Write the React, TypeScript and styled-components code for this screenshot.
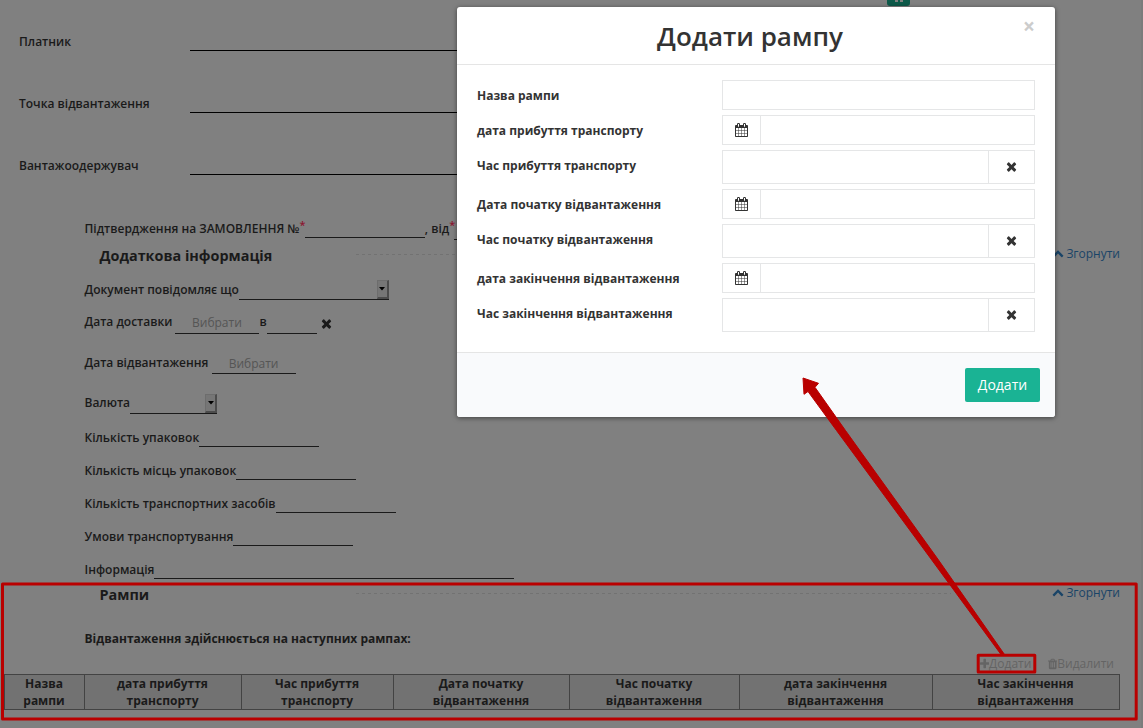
import React from "react";
import styled, { createGlobalStyle } from "styled-components";

const Global = createGlobalStyle`
  * { box-sizing: border-box; }
  body { margin: 0; background: #808080; font-family: "Open Sans", sans-serif; font-size: 12px; line-height: 18px; color: #1a1a1a; overflow: hidden; }
`;

const Page = styled.main`
  position: relative;
  width: 1143px;
  height: 728px;
  overflow: hidden;
  background: #808080;
  border-right: 2px solid #7b7b7b;
`;

const Parties = styled.section`
  display: flex;
  flex-direction: column;
  gap: 31px;
  padding: 20px 0 0 19px;
`;

const PartyRow = styled.div`
  display: flex;
  align-items: flex-end;
  height: 31px;
`;

const PartyLabel = styled.span`
  width: 171px;
  font-weight: 600;
`;

const PartyInput = styled.div`
  width: 700px;
  height: 31px;
  border-bottom: 1px solid #000;
`;

const Field = styled.div<{ $h: number }>`
  display: flex;
  align-items: flex-end;
  height: ${(p) => p.$h}px;
  padding-left: 84.5px;
`;

const Label = styled.span<{ $up?: number }>`
  flex: none;
  margin-bottom: ${(p) => p.$up ?? 0}px;
  font-weight: 600;
  white-space: pre;
`;

const Star = styled.span`
  flex: none;
  width: 5.2px;
  margin-bottom: 4px;
  font-size: 11px;
  font-weight: 600;
  color: #8c1630;
`;

const Blank = styled.div<{ $w: number; $drop?: number }>`
  flex: none;
  display: flex;
  justify-content: flex-end;
  width: ${(p) => p.$w}px;
  height: 20px;
  margin-bottom: -${(p) => p.$drop ?? 0}px;
  border-bottom: 1px solid #1a1a1a;
`;

const PickDate = styled(Blank)<{ $low?: boolean }>`
  justify-content: center;
  padding-top: ${(p) => (p.$low ? 1 : 0)}px;
  margin-left: ${(p) => (p.$low ? 0 : -0.6)}px;
  margin-right: ${(p) => (p.$low ? 0 : 0.6)}px;
  color: #555;
`;

const SelectArrow = styled.span`
  display: flex;
  align-items: center;
  justify-content: center;
  width: 12px;
  height: 19px;
  background: #767676;
  border: 1px solid;
  border-color: #6d6d6d #4c4c4c #4c4c4c #6d6d6d;
  border-right-width: 2px;
  border-bottom-width: 2px;
`;

const ClearSlot = styled.span`
  display: flex;
  margin: 0 0 3px 4px;
`;

const SectionHead = styled.header<{ $h: number }>`
  display: flex;
  align-items: center;
  height: ${(p) => p.$h}px;
  padding: 0 21px 0 99.5px;
`;

const SectionTitle = styled.h2`
  width: 256px;
  margin: 3px 0 0;
  font-size: 14.4px;
  line-height: 20px;
  font-weight: 700;
`;

const Dashes = styled.div`
  width: 595px;
  height: 1px;
  margin-top: 1px;
  background: repeating-linear-gradient(90deg, #727272 0 3px, transparent 3px 6px);
`;

const Collapse = styled.a`
  display: flex;
  align-items: center;
  gap: 2.5px;
  margin-left: auto;
  margin-top: -1px;
  color: #1a4467;
`;

const RampNote = styled.p`
  margin: 23px 0 0 84.5px;
  font-weight: 700;
`;

const TableTools = styled.div`
  display: flex;
  justify-content: flex-end;
  gap: 16.5px;
  margin-top: 7px;
  padding-right: 27px;
  color: #646464;
`;

const Tool = styled.span`
  display: flex;
  align-items: center;
`;

const Table = styled.table`
  width: 1116px;
  margin: 1px 0 0 4px;
  table-layout: fixed;
  border-collapse: collapse;
`;

const HeadCell = styled.th`
  height: 35px;
  padding: 0 11px 0 10px;
  border: 1px solid #434343;
  background: #727272;
  font-weight: 700;
  line-height: 17px;
  text-align: center;
`;

const TopTab = styled.div`
  position: absolute;
  left: 887px;
  top: 0;
  display: flex;
  justify-content: center;
  gap: 2px;
  width: 23px;
  height: 6px;
  border-radius: 0 0 3px 3px;
  background: #0d5a4a;
`;

const TabMark = styled.i`
  width: 3px;
  height: 2px;
  background: #808080;
`;

const Modal = styled.div`
  position: absolute;
  left: 457px;
  top: 7px;
  display: flex;
  flex-direction: column;
  width: 598px;
  height: 410px;
  border-radius: 3px;
  overflow: hidden;
  background: #fff;
  color: #333;
  box-shadow: 0 1px 5px rgba(0, 0, 0, 0.5);
`;

const ModalHeader = styled.header`
  position: relative;
  height: 58px;
  border-bottom: 1px solid #e5e5e5;
`;

const ModalTitle = styled.h1`
  margin: 0;
  padding-right: 12px;
  font-size: 26px;
  line-height: 58px;
  font-weight: 600;
  text-align: center;
`;

const Close = styled.span`
  position: absolute;
  right: 20px;
  top: 9px;
  font-size: 21px;
  line-height: 20px;
  font-weight: 700;
  color: #ccc;
`;

const ModalBody = styled.div`
  display: flex;
  flex-direction: column;
  gap: 5px;
  padding: 15px 20px 20px;
`;

const FormRow = styled.div`
  display: flex;
  align-items: flex-start;
`;

const FormLabel = styled.label`
  width: 245px;
  padding-top: 7px;
  font-weight: 700;
`;

const Control = styled.div<{ $tall?: boolean }>`
  display: flex;
  width: 313px;
  height: ${(p) => (p.$tall ? 34 : 30)}px;
  border: 1px solid #e5e6e7;
`;

const Addon = styled.span<{ $end?: boolean }>`
  display: flex;
  align-items: center;
  justify-content: center;
  width: ${(p) => (p.$end ? 46 : 38)}px;
  margin-left: ${(p) => (p.$end ? "auto" : 0)};
  border: 0 solid #e5e6e7;
  border-width: ${(p) => (p.$end ? "0 0 0 1px" : "0 1px 0 0")};
`;

const ModalFooter = styled.footer`
  flex: 1;
  display: flex;
  justify-content: flex-end;
  padding: 15px;
  border-top: 1px solid #e5e5e5;
  background: #f9fafc;
`;

const Submit = styled.button`
  width: 75px;
  height: 34px;
  padding: 0;
  border: 0;
  border-radius: 2px;
  background: #1ab394;
  color: #fff;
  font: 14px/20px "Open Sans", sans-serif;
`;

const Markup = styled.svg`
  position: absolute;
  left: 0;
  top: 0;
`;

const icons = {
  times: "M1490 1322q0 40-28 68l-136 136q-28 28-68 28t-68-28l-294-294-294 294q-28 28-68 28t-68-28l-136-136q-28-28-28-68t28-68l294-294-294-294q-28-28-28-68t28-68l136-136q28-28 68-28t68 28l294 294 294-294q28-28 68-28t68 28l136 136q28 28 28 68t-28 68l-294 294 294 294q28 28 28 68z",
  plus: "M1600 736v192q0 40-28 68t-68 28h-416v416q0 40-28 68t-68 28h-192q-40 0-68-28t-28-68v-416h-416q-40 0-68-28t-28-68v-192q0-40 28-68t68-28h416v-416q0-40 28-68t68-28h192q40 0 68 28t28 68v416h416q40 0 68 28t28 68z",
  up: "M1683 1331l-166 165q-19 19-45 19t-45-19l-531-531-531 531q-19 19-45 19t-45-19l-166-165q-19-19-19-45.5t19-45.5l742-741q19-19 45-19t45 19l742 741q19 19 19 45.5t-19 45.5z",
  trash: "M704 1376v-704q0-14-9-23t-23-9h-64q-14 0-23 9t-9 23v704q0 14 9 23t23 9h64q14 0 23-9t9-23zm256 0v-704q0-14-9-23t-23-9h-64q-14 0-23 9t-9 23v704q0 14 9 23t23 9h64q14 0 23-9t9-23zm256 0v-704q0-14-9-23t-23-9h-64q-14 0-23 9t-9 23v704q0 14 9 23t23 9h64q14 0 23-9t9-23zm-544-992h448l-48-117q-7-9-17-11h-317q-10 2-17 11zm928 32v64q0 14-9 23t-23 9h-96v948q0 83-47 143.5t-113 60.5h-832q-66 0-113-58.5t-47-141.5v-952h-96q-14 0-23-9t-9-23v-64q0-14 9-23t23-9h309l70-167q15-37 54-63t79-26h320q40 0 79 26t54 63l70 167h309q14 0 23 9t9 23z",
  calendar: "M128 1664h288v-288h-288v288zM480 1664h320v-288h-320v288zM128 1312h288v-320h-288v320zM480 1312h320v-320h-320v320zM128 928h288v-288h-288v288zM864 1664h320v-288h-320v288zM480 928h320v-288h-320v288zM1248 1664h288v-288h-288v288zM864 1312h320v-320h-320v320zM512 448v-288q0-13-9.5-22.5t-22.5-9.5h-64q-13 0-22.5 9.5t-9.5 22.5v288q0 13 9.5 22.5t22.5 9.5h64q13 0 22.5-9.5t9.5-22.5zM1248 1312h288v-320h-288v320zM864 928h320v-288h-320v288zM1248 928h288v-288h-288v288zM1280 448v-288q0-13-9.5-22.5t-22.5-9.5h-64q-13 0-22.5 9.5t-9.5 22.5v288q0 13 9.5 22.5t22.5 9.5h64q13 0 22.5-9.5t9.5-22.5zM1664 384v1280q0 52-38 90t-90 38h-1408q-52 0-90-38t-38-90v-1280q0-52 38-90t90-38h128v-96q0-66 47-113t113-47h64q66 0 113 47t47 113v96h384v-96q0-66 47-113t113-47h64q66 0 113 47t47 113v96h128q52 0 90 38t38 90z",
};

const viewBoxes: Record<keyof typeof icons, [number, number, number, number]> = {
  times: [192, 64, 1408, 1792],
  plus: [192, 0, 1408, 1664],
  up: [0, 128, 1792, 1792],
  trash: [192, 0, 1408, 1792],
  calendar: [0, 0, 1664, 1792],
};

function Icon({ name, size = 14 }: { name: keyof typeof icons; size?: number }) {
  const [x, y, w, h] = viewBoxes[name];
  const k = size / 1792;
  return (
    <svg width={w * k} height={h * k} viewBox={`${x} ${y} ${w} ${h}`} fill="currentColor">
      <path d={icons[name]} />
    </svg>
  );
}

function Caret() {
  return (
    <SelectArrow>
      <svg width="6" height="4" viewBox="0 0 6 4"><path d="M0 0h6L3 3.5z" fill="#000" /></svg>
    </SelectArrow>
  );
}

function Fold() {
  return (
    <Collapse><Icon name="up" size={12} />Згорнути</Collapse>
  );
}

const parties = ["Платник", "Точка відвантаження", "Вантажоодержувач"];

const blanks: [string, number][] = [
  ["Кількість упаковок", 120],
  ["Кількість місць упаковок", 120],
  ["Кількість транспортних засобів", 120],
  ["Умови транспортування", 120],
  ["Інформація", 360],
];

const columns: [string, number][] = [
  ["Назва рампи", 80],
  ["дата прибуття транспорту", 157],
  ["Час прибуття транспорту", 152],
  ["Дата початку відвантаження", 176],
  ["Час початку відвантаження", 170],
  ["дата закінчення відвантаження", 193],
  ["Час закінчення відвантаження", 187],
];

const rampFields: [string, "text" | "date" | "time"][] = [
  ["Назва рампи", "text"],
  ["дата прибуття транспорту", "date"],
  ["Час прибуття транспорту", "time"],
  ["Дата початку відвантаження", "date"],
  ["Час початку відвантаження", "time"],
  ["дата закінчення відвантаження", "date"],
  ["Час закінчення відвантаження", "time"],
];

export default function App() {
  return (
    <Page>
      <Global />
      <Parties>
        {parties.map((p) => (
          <PartyRow key={p}><PartyLabel>{p}</PartyLabel><PartyInput /></PartyRow>
        ))}
      </Parties>
      <Field $h={63}>
        <Label>Підтвердження на ЗАМОВЛЕННЯ №</Label><Star>*</Star>
        <Blank $w={120} /><Label>, від</Label><Star>*</Star><Blank $w={120} $drop={2} />
      </Field>
      <SectionHead $h={32}>
        <SectionTitle>Додаткова інформація</SectionTitle><Dashes /><Fold />
      </SectionHead>
      <Field $h={30}><Label $up={1}>Документ повідомляє що</Label><Blank $w={150}><Caret /></Blank></Field>
      <Field $h={34}>
        <Label $up={3}>{"Дата доставки "}</Label><PickDate $w={84}>Вибрати</PickDate>
        <Label $up={3}>в</Label><Blank $w={50} /><ClearSlot><Icon name="times" size={14} /></ClearSlot>
      </Field>
      <Field $h={40}><Label $up={2}>{"Дата відвантаження "}</Label><PickDate $w={84} $low>Вибрати</PickDate></Field>
      <Field $h={40}><Label $up={2}>Валюта</Label><Blank $w={87}><Caret /></Blank></Field>
      {blanks.map(([text, w]) => (
        <Field key={text} $h={33}><Label>{text}</Label><Blank $w={w} /></Field>
      ))}
      <SectionHead $h={28}>
        <SectionTitle>Рампи</SectionTitle><Dashes /><Fold />
      </SectionHead>
      <RampNote>Відвантаження здійснюється на наступних рампах:</RampNote>
      <TableTools>
        <Tool><Icon name="plus" size={12} />Додати</Tool>
        <Tool><Icon name="trash" size={12} />Видалити</Tool>
      </TableTools>
      <Table>
        <colgroup>{columns.map(([c, w]) => <col key={c} width={w} />)}</colgroup>
        <thead><tr>{columns.map(([c]) => <HeadCell key={c}>{c.slice(0, c.lastIndexOf(" "))}<br />{c.slice(c.lastIndexOf(" ") + 1)}</HeadCell>)}</tr></thead>
      </Table>
      <TopTab><TabMark /><TabMark /></TopTab>
      <Modal>
        <ModalHeader><ModalTitle>Додати рампу</ModalTitle><Close>×</Close></ModalHeader>
        <ModalBody>
          {rampFields.map(([text, kind]) => (
            <FormRow key={text}>
              <FormLabel>{text}</FormLabel>
              <Control $tall={kind === "time"}>
                {kind === "date" && <Addon><Icon name="calendar" /></Addon>}
                {kind === "time" && <Addon $end><Icon name="times" /></Addon>}
              </Control>
            </FormRow>
          ))}
        </ModalBody>
        <ModalFooter><Submit>Додати</Submit></ModalFooter>
      </Modal>
      <Markup width="1143" height="728" fill="none" stroke="#b90000" strokeLinejoin="round">
        <rect x="2.5" y="584" width="1133.7" height="135" strokeWidth="3" />
        <rect x="978.2" y="655.2" width="56.6" height="16.8" strokeWidth="3" />
        <path d="M803 378L818.5 383.3L815 387.3L845.5 430.5L938.5 560L1004.5 654.5H1001L932.5 561L836.5 430.5L808 391.5L804 394.3Z" fill="#b90000" />
      </Markup>
    </Page>
  );
}
